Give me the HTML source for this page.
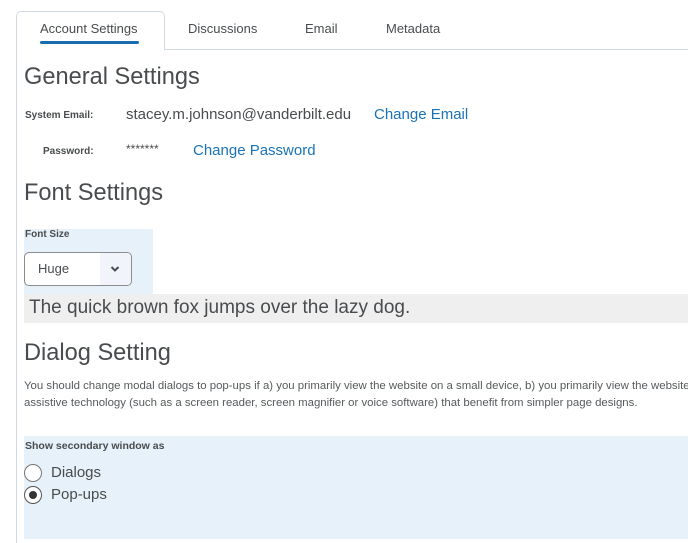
<!DOCTYPE html><html><head><style>
body{margin:0;width:688px;height:543px;overflow:hidden;background:#fff;font-family:"Liberation Sans",sans-serif;color:#494c4e;position:relative}
.a{position:absolute;white-space:nowrap}
h{position:absolute;font-size:23.6px;color:#494c4e;white-space:nowrap}
.lab{font-size:10px;font-weight:bold;color:#494c4e}
.link{color:#1a73b8;font-size:15px}
</style></head><body>
<div class="a" style="left:16px;top:49px;width:672px;height:1px;background:#d3d9e3"></div>
<div class="a" style="left:16px;top:49px;width:1px;height:494px;background:#d3d9e3"></div>
<div class="a" style="left:16px;top:11px;width:147px;height:38px;border:1px solid #d3d9e3;border-bottom:none;border-radius:5px 5px 0 0;background:#fff"></div>
<div class="a" style="left:40px;top:21px;font-size:13px">Account Settings</div>
<div class="a" style="left:40px;top:41px;width:99px;height:3px;background:#1a6bb0;border-radius:2px"></div>
<div class="a" style="left:188px;top:21px;font-size:13px">Discussions</div>
<div class="a" style="left:305px;top:21px;font-size:13px">Email</div>
<div class="a" style="left:386px;top:21px;font-size:13px">Metadata</div>
<h style="left:24px;top:64px">General Settings</h>
<div class="a lab" style="left:25px;top:110px">System Email:</div>
<div class="a" style="left:126px;top:106px;font-size:15px">stacey.m.johnson@vanderbilt.edu</div>
<div class="a link" style="left:374px;top:106px">Change Email</div>
<div class="a lab" style="left:43px;top:146px">Password:</div>
<div class="a" style="left:126px;top:142px;font-size:12px">*******</div>
<div class="a link" style="left:193px;top:142px">Change Password</div>
<h style="left:24px;top:180px">Font Settings</h>
<div class="a" style="left:24px;top:229px;width:129px;height:65px;background:#e6f1f9"></div>
<div class="a lab" style="left:25px;top:229px">Font Size</div>
<div class="a" style="left:24px;top:252px;width:106px;height:32px;border:1px solid #8a8c8e;border-radius:5px;background:#fff;overflow:hidden">
<div class="a" style="left:13px;top:8px;font-size:13px">Huge</div>
<div class="a" style="left:75px;top:0;width:31px;height:32px;background:#f1f5fb"></div>
<svg class="a" style="left:85px;top:12px" width="10" height="8" viewBox="0 0 10 8"><path d="M1.5 2 L5 5.5 L8.5 2" fill="none" stroke="#494c4e" stroke-width="2"/></svg>
</div>
<div class="a" style="left:24px;top:294px;width:664px;height:29px;background:#efefef"></div>
<div class="a" style="left:29px;top:297px;font-size:19px">The quick brown fox jumps over the lazy dog.</div>
<h style="left:24px;top:340px">Dialog Setting</h>
<div class="a" style="left:24px;top:378px;font-size:11.4px;line-height:17px;color:#565a5c">You should change modal dialogs to pop-ups if a) you primarily view the website on a small device, b) you primarily view the website<br>assistive technology (such as a screen reader, screen magnifier or voice software) that benefit from simpler page designs.</div>
<div class="a" style="left:24px;top:436px;width:664px;height:103px;background:#e6f1f9"></div>
<div class="a lab" style="left:25px;top:440px;font-size:10.5px">Show secondary window as</div>
<div class="a" style="left:24px;top:464px;width:16px;height:16px;border:1px solid #777;border-radius:50%;background:#fff"></div>
<div class="a" style="left:51px;top:464px;font-size:15px">Dialogs</div>
<div class="a" style="left:24px;top:486px;width:16px;height:16px;border:1px solid #555;border-radius:50%;background:#fff"></div>
<div class="a" style="left:29px;top:491px;width:8px;height:8px;border-radius:50%;background:#333"></div>
<div class="a" style="left:51px;top:486px;font-size:15px">Pop-ups</div>
</body></html>
